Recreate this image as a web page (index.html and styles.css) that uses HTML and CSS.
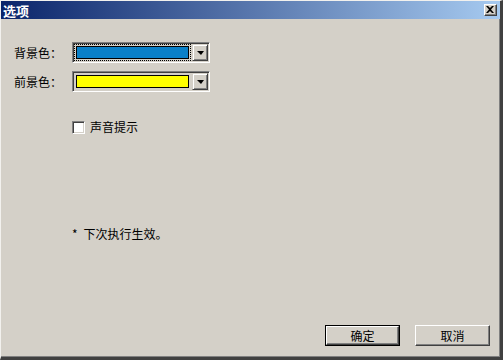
FILE: index.html
```html
<!DOCTYPE html>
<html lang="zh-CN">
<head>
<meta charset="utf-8">
<title>选项</title>
<link rel="stylesheet" href="styles.css">
</head>
<body>
<div class="window">
  <div class="titlebar">
    <span class="title">选项</span>
    <span class="close-btn">
      <svg width="8" height="7" viewBox="0 0 8 7"><path d="M0 0h2l2 2 2-2h2L5 3.5 8 7H6L4 5 2 7H0l3-3.5z" fill="#000"/></svg>
    </span>
  </div>
  <div class="content">
    <div class="row">
      <span class="label">背景色：</span>
      <div class="combo">
        <div class="combo-field focused"><span class="swatch blue"></span></div>
        <span class="combo-btn"><span class="arrow"></span></span>
      </div>
    </div>
    <div class="row row2">
      <span class="label">前景色：</span>
      <div class="combo">
        <div class="combo-field"><span class="swatch yellow"></span></div>
        <span class="combo-btn"><span class="arrow"></span></span>
      </div>
    </div>
    <div class="check-row">
      <span class="checkbox"></span>
      <span class="check-label">声音提示</span>
    </div>
    <div class="note"><span class="star">*</span>下次执行生效。</div>
    <div class="footer">
      <span class="btn default"><span class="btn-inner">确定</span></span>
      <span class="btn"><span class="btn-inner">取消</span></span>
    </div>
  </div>
</div>
</body>
</html>
```

FILE: styles.css
```css
* { box-sizing: border-box; }
html, body { margin: 0; padding: 0; background: #d4d0c8; }
body {
  font-family: "Noto Sans CJK SC", "Noto Sans", "DejaVu Sans", sans-serif;
  font-size: 12px;
  color: #000;
}
.window {
  width: 503px;
  height: 360px;
  background: #d4d0c8;
  border-top: 1px solid #f2f1ee;
  border-left: 1px solid #f2f1ee;
  border-right: 3px solid #404040;
  border-bottom: 3px solid #404040;
  box-shadow: inset -1px -1px 0 #808080;
  display: flex;
  flex-direction: column;
}
.titlebar {
  height: 18px;
  background: linear-gradient(to right, #0a246a, #a6caf0);
  display: flex;
  align-items: center;
  justify-content: space-between;
  padding: 0 3px 0 2px;
}
.title {
  color: #fff;
  font-weight: bold;
  font-size: 13px;
  line-height: 15px;
}
.close-btn {
  width: 13px;
  height: 12px;
  background: #d4d0c8;
  border-top: 1px solid #fff;
  border-left: 1px solid #fff;
  border-right: 1px solid #404040;
  border-bottom: 1px solid #404040;
  box-shadow: inset -1px -1px 0 #808080;
  display: flex;
  align-items: center;
  justify-content: center;
  padding: 0 1px 1px 0;
}
.close-btn svg { display: block; }
.content {
  flex: 1;
  display: flex;
  flex-direction: column;
  padding: 23px 10px 11px 13px;
}
.row {
  display: flex;
  align-items: center;
  height: 21px;
}
.row2 { margin-top: 8px; }
.label {
  width: 58px;
  line-height: 14px;
}
.combo {
  width: 138px;
  height: 21px;
  display: flex;
  border-top: 1px solid #808080;
  border-left: 1px solid #808080;
  border-right: 1px solid #fff;
  border-bottom: 1px solid #fff;
  box-shadow: inset 1px 1px 0 #404040, inset -1px -1px 0 #d4d0c8;
  padding: 1px;
}
.combo-field {
  flex: 1;
  padding: 1px;
  display: flex;
  border: 1px solid transparent;
  margin-right: 1px;
}
.combo-field.focused { border: 1px dotted #000; }
.swatch {
  flex: 1;
  border: 1px solid #000;
}
.swatch.blue { background: #0a80c8; }
.swatch.yellow { background: #ffff00; }
.combo-btn {
  width: 16px;
  background: #d4d0c8;
  border-top: 1px solid #d4d0c8;
  border-left: 1px solid #d4d0c8;
  border-right: 1px solid #404040;
  border-bottom: 1px solid #404040;
  box-shadow: inset 1px 1px 0 #fff, inset -1px -1px 0 #808080;
  display: flex;
  align-items: center;
  justify-content: center;
}
.arrow {
  width: 0;
  height: 0;
  border-left: 4px solid transparent;
  border-right: 3px solid transparent;
  border-top: 4px solid #000;
}
.check-row {
  display: flex;
  align-items: center;
  margin: 28px 0 0 58px;
  height: 14px;
}
.checkbox {
  width: 13px;
  height: 13px;
  background: #fff;
  border-top: 1px solid #808080;
  border-left: 1px solid #808080;
  border-right: 1px solid #fff;
  border-bottom: 1px solid #fff;
  box-shadow: inset 1px 1px 0 #404040, inset -1px -1px 0 #d4d0c8;
}
.check-label {
  margin-left: 5px;
  line-height: 14px;
}
.note {
  margin: 93px 0 0 58px;
  line-height: 14px;
}
.star { margin-right: 6px; }
.footer {
  margin-top: auto;
  display: flex;
  justify-content: flex-end;
  gap: 15px;
}
.btn {
  width: 75px;
  height: 21px;
  display: flex;
  border: 1px solid transparent;
}
.btn.default { border-color: #000; }
.btn-inner {
  flex: 1;
  display: flex;
  align-items: center;
  justify-content: center;
  border-top: 1px solid #fff;
  border-left: 1px solid #fff;
  border-right: 1px solid #404040;
  border-bottom: 1px solid #404040;
  box-shadow: inset -1px -1px 0 #808080;
  line-height: 14px;
}
.btn:not(.default) { border: 0; }
.btn:not(.default) .btn-inner { box-shadow: inset -1px -1px 0 #808080, inset 1px 1px 0 #d4d0c8; }
```
